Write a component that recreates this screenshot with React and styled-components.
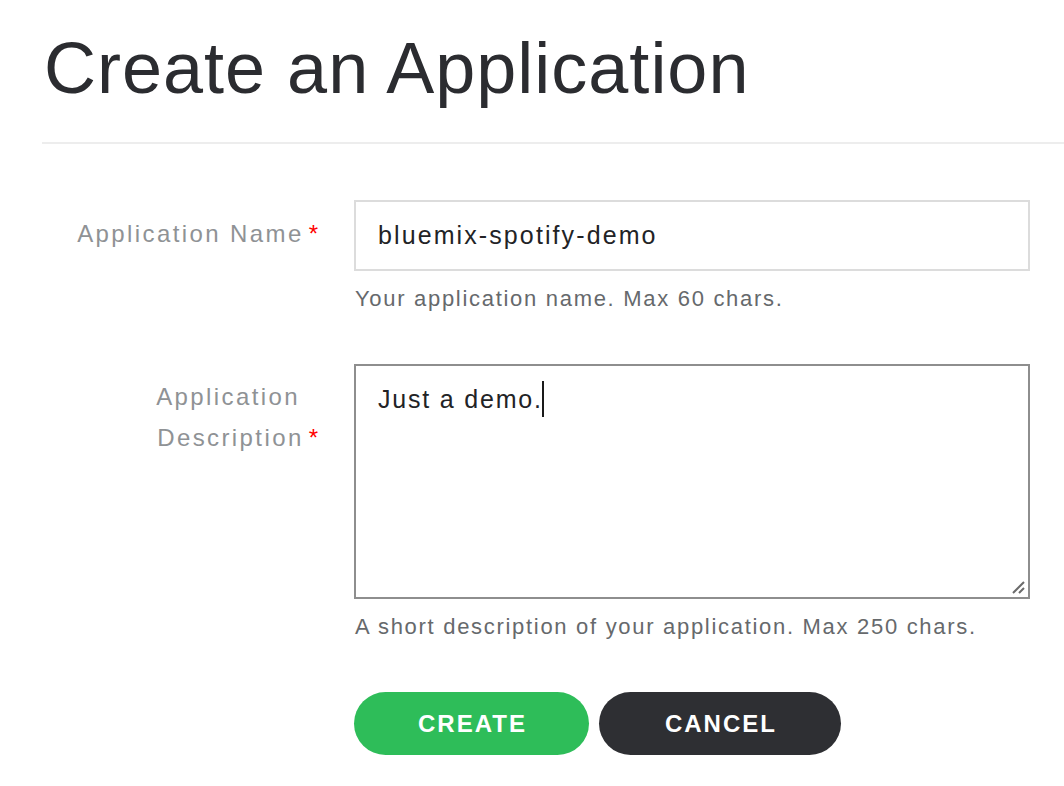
import styled, { createGlobalStyle } from "styled-components";

const GlobalStyle = createGlobalStyle`
  html, body {
    margin: 0;
    padding: 0;
    background: #ffffff;
  }
  body {
    font-family: "Liberation Sans", Arial, sans-serif;
    color: #2c2d31;
  }
`;

const Page = styled.main`
  width: 1064px;
  padding: 25px 0 0 42px;
  box-sizing: border-box;
`;

const Title = styled.h1`
  margin: 0 0 31px 2px;
  font-size: 72px;
  line-height: 86px;
  font-weight: 400;
  letter-spacing: 1px;
  color: #2b2c30;
`;

const Divider = styled.hr`
  margin: 0;
  border: none;
  height: 2px;
  background: #ededed;
`;

const Form = styled.form`
  display: flex;
  flex-direction: column;
  padding-top: 56px;
`;

const Row = styled.div`
  display: grid;
  grid-template-columns: 278px 676px;
  column-gap: 34px;
  margin-bottom: ${(p) => p.$gap || 0}px;
`;

const Label = styled.label`
  padding: ${(p) => p.$top}px 20px 0 0;
  text-align: right;
  font-size: 24px;
  line-height: 41px;
  letter-spacing: 2.4px;
  color: #8f9295;
`;

const Required = styled.span`
  color: #ff0000;
  margin-left: 5px;
  margin-right: -18px;
  letter-spacing: 0;
`;

const Field = styled.div`
  display: flex;
  flex-direction: column;
`;

const TextInput = styled.input`
  box-sizing: border-box;
  width: 676px;
  height: 71px;
  padding: 0 22px;
  border: 2px solid #dcdcdc;
  border-radius: 0;
  outline: none;
  font-family: "Liberation Sans", Arial, sans-serif;
  font-size: 25px;
  letter-spacing: 2.1px;
  color: #222326;
  background: #fff;
`;

const TextArea = styled.div`
  position: relative;
  box-sizing: border-box;
  width: 676px;
  height: 235px;
  padding: 15px 22px;
  border: 2px solid #8e8e8e;
  font-size: 25px;
  line-height: 36px;
  letter-spacing: 1.8px;
  color: #222326;
`;

const Caret = styled.span`
  display: inline-block;
  width: 2px;
  height: 36px;
  margin-left: -1px;
  vertical-align: top;
  background: #1a1a1a;
`;

const Grip = styled.svg`
  position: absolute;
  right: 2px;
  bottom: 2px;
`;

const Help = styled.p`
  margin: 13px 0 0 1px;
  font-size: 22px;
  line-height: 30px;
  letter-spacing: 1.7px;
  color: #66696c;
`;

const Actions = styled.div`
  display: flex;
  gap: 10px;
  margin-left: 312px;
`;

const Button = styled.button`
  height: 63px;
  padding: 0 ${(p) => p.$pad}px 0 ${(p) => p.$pad + 2}px;
  border: none;
  border-radius: 32px;
  background: ${(p) => (p.$dark ? "#2e2f33" : "#2ebd59")};
  color: #ffffff;
  font-family: "Liberation Sans", Arial, sans-serif;
  font-size: 24px;
  font-weight: 700;
  letter-spacing: 2px;
  cursor: pointer;
`;

export default function App() {
  return (
    <Page>
      <GlobalStyle />
      <Title>Create an Application</Title>
      <Divider />
      <Form onSubmit={(e) => e.preventDefault()}>
        <Row $gap={50}>
          <Label $top={13}>
            Application Name<Required>*</Required>
          </Label>
          <Field>
            <TextInput defaultValue="bluemix-spotify-demo" />
            <Help>Your application name. Max 60 chars.</Help>
          </Field>
        </Row>
        <Row $gap={50}>
          <Label $top={12}>
            Application Description<Required>*</Required>
          </Label>
          <Field>
            <TextArea role="textbox">
              Just a demo.<Caret />
              <Grip width="16" height="16" viewBox="0 0 16 16">
                <path d="M3 14 L14 3 M9 14 L14 9" stroke="#6b6b6b" strokeWidth="2" />
              </Grip>
            </TextArea>
            <Help>A short description of your application. Max 250 chars.</Help>
          </Field>
        </Row>
        <Actions>
          <Button type="submit" $pad={62}>CREATE</Button>
          <Button type="button" $dark $pad={64}>CANCEL</Button>
        </Actions>
      </Form>
    </Page>
  );
}
